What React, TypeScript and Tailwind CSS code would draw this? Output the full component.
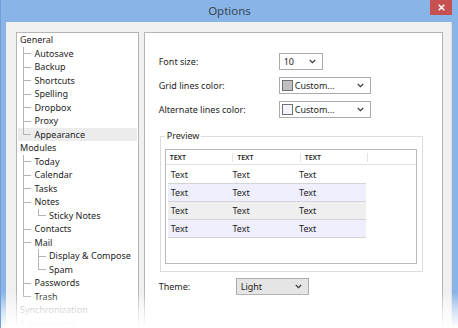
import React from 'react';

type TreeItem = {
    label: string;
    guides: ('none' | 'pipe' | 'tee' | 'elbow')[];
    selected?: boolean;
    muted?: string;
};

// tree rows, the guides describe the connector lines in front of the label
const treeItems: TreeItem[] = [
    { label: 'General', guides: [] },
    { label: 'Autosave', guides: ['tee'] },
    { label: 'Backup', guides: ['tee'] },
    { label: 'Shortcuts', guides: ['tee'] },
    { label: 'Spelling', guides: ['tee'] },
    { label: 'Dropbox', guides: ['tee'] },
    { label: 'Proxy', guides: ['tee'] },
    { label: 'Appearance', guides: ['elbow'], selected: true },
    { label: 'Modules', guides: [] },
    { label: 'Today', guides: ['tee'] },
    { label: 'Calendar', guides: ['tee'] },
    { label: 'Tasks', guides: ['tee'] },
    { label: 'Notes', guides: ['tee'] },
    { label: 'Sticky Notes', guides: ['pipe', 'elbow'] },
    { label: 'Contacts', guides: ['tee'] },
    { label: 'Mail', guides: ['tee'] },
    { label: 'Display & Compose', guides: ['pipe', 'tee'] },
    { label: 'Spam', guides: ['pipe', 'elbow'] },
    { label: 'Passwords', guides: ['tee'] },
    { label: 'Trash', guides: ['elbow'] },
    { label: 'Synchronization', guides: [], muted: 'text-[#9a9a9a]' },
    { label: 'Subscriptions', guides: [], muted: 'text-[#c8c8c8]' },
];

const Guide: React.FC<{ kind: 'none' | 'pipe' | 'tee' | 'elbow' }> = ({ kind }) => (
    <span className="relative w-[14.5px] h-full shrink-0">
        {kind !== 'none' && (
            <span
                className={
                    kind === 'elbow'
                        ? 'absolute left-[3px] top-0 h-1/2 w-px bg-[#b4b4b4]'
                        : 'absolute left-[3px] top-0 h-full w-px bg-[#b4b4b4]'
                }
            />
        )}
        {(kind === 'tee' || kind === 'elbow') && (
            <span className="absolute left-[3px] top-1/2 w-[8px] h-px bg-[#b4b4b4]" />
        )}
    </span>
);

const Chevron = () => (
    <svg width="7" height="5" viewBox="0 0 7 5" className="shrink-0">
        <path d="M0.8 1 L3.5 3.7 L6.2 1" fill="none" stroke="#3c3c3c" strokeWidth="1.2" />
    </svg>
);

const Combo: React.FC<{ width: string; swatch?: string; text: string; gray?: boolean }> = ({ width, swatch, text, gray }) => (
    <div
        className={`${width} h-[17px] flex items-center border border-[#acacac] ${gray ? 'bg-[#e5e5e5] pl-[4px]' : 'bg-white pl-[2px]'} pr-[6px]`}
    >
        {swatch && <span className={`w-[11px] h-[11px] mr-[2px] border border-[#707070] ${swatch}`} />}
        <span className="flex-1 text-[9px] text-[#1e1e1e] leading-none">{text}</span>
        <Chevron />
    </div>
);

const rowColors = ['bg-white', 'bg-[#eeeefc]', 'bg-[#efefef]', 'bg-[#eeeefc]'];

export default function App() {
    return (
        <div
            className="relative w-[458px] h-[328px] overflow-hidden bg-[#88b4e7] border-l border-[#6f9fd8] flex flex-col"
            style={{ fontFamily: '"Noto Sans", "Open Sans", sans-serif' }}
        >
            {/* title bar */}
            <div className="relative h-[22px] shrink-0 flex items-center justify-center">
                <span className="text-[11.5px] text-[#3a4652] mt-[-1px]">Options</span>
                <div className="absolute right-[6px] top-0 w-[22px] h-[15px] bg-[#c75050] flex items-center justify-center">
                    <svg width="7" height="7" viewBox="0 0 7 7">
                        <path d="M0.7 0.7 L6.3 6.3 M6.3 0.7 L0.7 6.3" stroke="#fff" strokeWidth="1.5" />
                    </svg>
                </div>
            </div>

            {/* body */}
            <div className="flex-1 ml-[5px] mr-[6px] bg-[#f0f0f0] pt-[10px] pl-[10px] pr-[8px] flex gap-[5px] border-r border-[#dcdcdc]">
                {/* tree */}
                <div className="w-[123px] h-[320px] bg-white border border-[#b5b5b5] pt-[0px] px-px">
                    {treeItems.map((item) => (
                        <div
                            key={item.label}
                            className={`h-[13.5px] flex items-center pl-[2px] ${item.selected ? 'bg-[#ececec]' : ''}`}
                        >
                            {item.guides.map((g, i) => (
                                <Guide key={i} kind={g} />
                            ))}
                            <span
                                className={`text-[9px] leading-none whitespace-nowrap ${item.muted ?? 'text-[#1e1e1e]'}`}
                            >
                                {item.label}
                            </span>
                        </div>
                    ))}
                </div>

                {/* settings panel */}
                <div className="w-[300px] h-[320px] bg-white border border-[#b5b5b5] pl-[14px] pt-[20px]">
                    <div className="flex flex-col gap-[7px]">
                        <div className="flex items-center h-[17px]">
                            <span className="w-[120px] text-[9px] text-[#1e1e1e]">Font size:</span>
                            <div className="w-[44px] h-[17px] flex items-center border border-[#acacac] bg-white pl-[4px] pr-[6px]">
                                <span className="flex-1 text-[9px] text-[#1e1e1e] leading-none">10</span>
                                <Chevron />
                            </div>
                        </div>
                        <div className="flex items-center h-[17px]">
                            <span className="w-[120px] text-[9px] text-[#1e1e1e]">Grid lines color:</span>
                            <Combo width="w-[92px]" swatch="bg-[#c0c0c0]" text="Custom..." />
                        </div>
                        <div className="flex items-center h-[17px]">
                            <span className="w-[120px] text-[9px] text-[#1e1e1e]">Alternate lines color:</span>
                            <Combo width="w-[92px]" swatch="bg-[#f4f4fe]" text="Custom..." />
                        </div>
                    </div>

                    {/* preview group */}
                    <div className="relative mt-[18px] ml-[1px] w-[263px] h-[136px] border border-[#dcdcdc] px-[4px] pt-[12px]">
                        <span className="absolute left-[4px] top-[-7px] bg-white px-[2px] text-[9px] leading-[12px] text-[#1e1e1e]">
                            Preview
                        </span>
                        <div className="w-[252px] h-[115px] border border-[#b9b9b9]">
                            <div className="h-[15px] flex items-center border-b border-[#e3e3e3]">
                                {[0, 1, 2].map((c) => (
                                    <div key={c} className="w-[67.5px] h-full flex items-center justify-between pl-[4px]">
                                        <span className="text-[7px] font-semibold text-[#1e1e1e] leading-none">TEXT</span>
                                        <span className="w-px h-[9px] bg-[#e3e3e3]" />
                                    </div>
                                ))}
                            </div>
                            <div className="pt-[1px] pl-[2px]">
                                {rowColors.map((bg, r) => (
                                    <div key={r} className={`w-[198px] h-[18px] flex items-center border-b-[1.5px] border-[#d4d4d4] ${bg}`}>
                                        {[0, 1, 2].map((c) => (
                                            <span
                                                key={c}
                                                className={`text-[9px] text-[#1e1e1e] leading-none ${c === 0 ? 'w-[65px] pl-[3px]' : 'w-[67px]'}`}
                                            >
                                                Text
                                            </span>
                                        ))}
                                    </div>
                                ))}
                            </div>
                        </div>
                    </div>

                    <div className="flex items-center h-[17px] mt-[6px]">
                        <span className="w-[77px] text-[9px] text-[#1e1e1e]">Theme:</span>
                        <Combo width="w-[73px]" text="Light" gray />
                    </div>
                </div>
            </div>

            {/* fade out at the bottom of the screenshot */}
            <div className="absolute left-0 right-0 bottom-0 h-[36px] bg-gradient-to-b from-white/0 via-white/60 to-white" />
        </div>
    );
}
